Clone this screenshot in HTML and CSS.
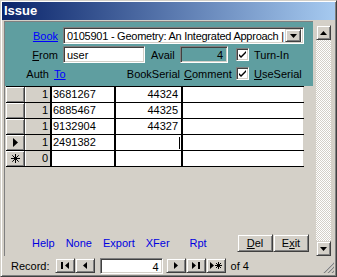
FILE: index.html
```html
<!DOCTYPE html>
<html lang="en">
<head>
  <meta charset="UTF-8">
  <title>Issue</title>
  <link rel="stylesheet" href="styles.css">
</head>
<body>

<div class="window">
  <div class="titlebar">Issue</div>

  <div class="client">
    <div class="form">

      <div class="header">
        <div class="hrow">
          <span class="lbl"><a class="link">Book</a></span>
          <div class="field combo">
            <span class="combo-text">0105901 - Geometry: An Integrated Approach |</span>
            <span class="btn combo-btn"><svg width="7" height="4"><path d="M0 0h7l-3.5 4z"/></svg></span>
          </div>
        </div>

        <div class="hrow">
          <span class="lbl"><u>F</u>rom</span>
          <div class="field from">user</div>
          <span class="avail-lbl">Avail</span>
          <div class="field avail">4</div>
          <span class="check"><svg width="7" height="7"><path d="M0 3l2 2 5-5v2l-5 5-2-2z"/></svg></span>
          <span class="check-lbl">Turn-In</span>
        </div>

        <div class="hrow cols">
          <span class="c-auth">Auth</span>
          <span class="c-to"><a class="link">To</a></span>
          <span class="c-serial">BookSerial</span>
          <span class="c-comment"><u>C</u>omment</span>
          <span class="check"><svg width="7" height="7"><path d="M0 3l2 2 5-5v2l-5 5-2-2z"/></svg></span>
          <span class="check-lbl"><u>U</u>seSerial</span>
        </div>
      </div>

      <div class="grid">
        <div class="row">
          <span class="sel"></span><span class="auth">1</span><span class="cell">3681267</span><span class="cell num">44324</span><span class="cell comment"></span>
        </div>
        <div class="row">
          <span class="sel"></span><span class="auth">1</span><span class="cell">6885467</span><span class="cell num">44325</span><span class="cell comment"></span>
        </div>
        <div class="row">
          <span class="sel"></span><span class="auth">1</span><span class="cell">9132904</span><span class="cell num">44327</span><span class="cell comment"></span>
        </div>
        <div class="row">
          <span class="sel"><svg width="5" height="9"><path d="M0 0l5 4.5-5 4.5z"/></svg></span><span class="auth">1</span><span class="cell">2491382</span><span class="cell num"><i class="caret"></i></span><span class="cell comment"></span>
        </div>
        <div class="row">
          <span class="sel"><svg width="9" height="9" stroke="#000" stroke-width="1"><path d="M4.5 0v9M0 4.5h9M1.3 1.3l6.4 6.4M7.7 1.3l-6.4 6.4"/></svg></span><span class="auth">0</span><span class="cell"></span><span class="cell num"></span><span class="cell comment"></span>
        </div>
      </div>

      <div class="footer">
        <a class="flink">Help</a>
        <a class="flink">None</a>
        <a class="flink">Export</a>
        <a class="flink">XFer</a>
        <a class="flink rpt">Rpt</a>
        <span class="buttons">
          <span class="btn push"><u>D</u>el</span>
          <span class="btn push">E<u>x</u>it</span>
        </span>
      </div>

    </div>

    <div class="vscroll">
      <span class="btn sbtn"><svg width="7" height="4"><path d="M3.5 0l3.5 4h-7z"/></svg></span>
      <span class="track"></span>
      <span class="btn sbtn"><svg width="7" height="4"><path d="M0 0h7l-3.5 4z"/></svg></span>
    </div>
  </div>

  <div class="navbar">
    <span class="rec">Record:</span>
    <span class="btn nbtn"><svg width="8" height="7"><path d="M0 0h2v7h-2zM8 0v7l-4-3.5z"/></svg></span>
    <span class="btn nbtn"><svg width="4" height="7"><path d="M4 0v7l-4-3.5z"/></svg></span>
    <span class="field recno">4</span>
    <span class="btn nbtn"><svg width="4" height="7"><path d="M0 0v7l4-3.5z"/></svg></span>
    <span class="btn nbtn"><svg width="8" height="7"><path d="M0 0v7l4-3.5zM6 0h2v7h-2z"/></svg></span>
    <span class="btn nbtn"><svg width="12" height="7"><path d="M0 0v7l4-3.5z"/><path d="M8.5 0v7M5 3.5h7M6 1l5 5M11 1l-5 5" stroke="#000" stroke-width="1"/></svg></span>
    <span class="of">of 4</span>
    <span class="grip"><svg width="11" height="11"><path d="M10 1L1 10M10 5L5 10M10 9L9 10" stroke="#fff" stroke-width="1"/><path d="M11 1L1 11M11 5L5 11M11 9L9 11" stroke="#808080" stroke-width="1.2"/></svg></span>
  </div>
</div>

</body>
</html>
```

FILE: styles.css
```css
* {
  box-sizing: border-box;
}
body {
  margin: 0;
  background: #d4d0c8;
  font-family: "Liberation Sans", Arial, sans-serif;
  font-size: 11px;
  color: #000;
}
.window {
  width: 337px;
  height: 277px;
  display: flex;
  flex-direction: column;
  background: #d4d0c8;
  border: 1px solid;
  border-color: #d4d0c8 #404040 #404040 #d4d0c8;
  box-shadow: inset 1px 1px #fff, inset -1px -1px #808080;
  padding: 1px;
}
.titlebar {
  height: 18px;
  line-height: 18px;
  padding-left: 2px;
  color: #fff;
  font-weight: bold;
  font-size: 13px;
  background: linear-gradient(to right, #0a246a, #a6caf0);
}
.client {
  display: flex;
  height: 235px;
  margin-top: 1px;
}
.form {
  width: 309px;
  margin-left: 2px;
  border-left: 1px solid #808080;
  border-top: 1px solid #808080;
  display: flex;
  flex-direction: column;
}

/* header */
.header {
  background: #5f9ea0;
  height: 64px;
  padding-top: 5px;
}
.hrow {
  display: flex;
  align-items: center;
  height: 17px;
  margin-bottom: 2px;
}
.hrow.cols {
  margin-top: 3px;
  height: 15px;
}
.lbl {
  width: 53px;
  text-align: right;
  margin-right: 5px;
}
.link {
  color: #0000ff;
  text-decoration: underline;
}
.field {
  height: 17px;
  background: #fff;
  border: 1px solid;
  border-color: #808080 #fff #fff #808080;
  box-shadow: inset 1px 1px #404040, inset -1px -1px #d4d0c8;
  padding: 2px 3px 0;
  line-height: 13px;
}
.combo {
  width: 241px;
  display: flex;
  padding-right: 2px;
}
.combo-text {
  flex: 1;
  white-space: nowrap;
  overflow: hidden;
  letter-spacing: -0.25px;
}
.btn {
  display: flex;
  align-items: center;
  justify-content: center;
  background: #d4d0c8;
  border: 1px solid;
  border-color: #d4d0c8 #404040 #404040 #d4d0c8;
  box-shadow: inset 1px 1px #fff, inset -1px -1px #808080;
}
.combo-btn {
  width: 16px;
  height: 13px;
  margin-top: -1px;
}
.from {
  width: 82px;
}
.avail-lbl {
  margin-left: 6px;
  width: 29px;
}
.avail {
  width: 48px;
  background: #5f9ea0;
  text-align: right;
  padding-right: 4px;
}
.check {
  width: 13px;
  height: 13px;
  margin-left: 8px;
  background: #fff;
  border: 1px solid;
  border-color: #808080 #fff #fff #808080;
  box-shadow: inset 1px 1px #404040, inset -1px -1px #d4d0c8;
  display: flex;
  align-items: center;
  justify-content: center;
}
.check-lbl {
  margin-left: 5px;
}
.c-auth {
  width: 44px;
  text-align: right;
}
.c-to {
  width: 58px;
  margin-left: 5px;
}
.c-serial {
  width: 68px;
  text-align: right;
}
.c-comment {
  width: 44px;
  margin-left: 4px;
}
.cols .check {
  margin-left: 8px;
}

/* datasheet */
.grid {
  margin-left: 1px;
  border-top: 1px solid #000;
  width: 298px;
}
.row {
  display: flex;
  height: 16px;
  border-bottom: 1px solid #000;
  line-height: 15px;
}
.sel {
  width: 19px;
  background: #d4d0c8;
  border-right: 1px solid #404040;
  box-shadow: inset 1px 1px #fff, inset -1px -1px #808080;
  display: flex;
  align-items: center;
  justify-content: center;
}
.auth {
  width: 27px;
  background: #d4d0c8;
  border-right: 2px solid #000;
  box-shadow: inset 1px 0 #fff;
  text-align: right;
  padding-right: 2px;
}
.cell {
  background: #fff;
  width: 64px;
  border-right: 2px solid #000;
  padding-left: 1px;
}
.cell.num {
  width: 67px;
  text-align: right;
  padding-right: 3px;
  position: relative;
}
.cell.comment {
  width: 121px;
  border-right: 1px solid #d4d0c8;
}
.caret {
  position: absolute;
  right: 1px;
  top: 2px;
  width: 1px;
  height: 12px;
  background: #000;
}

/* footer */
.footer {
  margin-top: auto;
  margin-bottom: 4px;
  display: flex;
  align-items: center;
  padding-left: 27px;
  padding-right: 4px;
}
.flink {
  color: #0000e0;
  margin-right: 11px;
}
.rpt {
  margin-left: 9px;
}
.buttons {
  margin-left: auto;
  display: flex;
}
.push {
  width: 36px;
  height: 18px;
}

/* scrollbar */
.vscroll {
  width: 15px;
  margin-left: 3px;
  margin-top: 4px;
  display: flex;
  flex-direction: column;
}
.sbtn {
  height: 15px;
}
.track {
  flex: 1;
  background: repeating-conic-gradient(#fff 0 25%, #d4d0c8 0 50%) 0 0 / 2px 2px;
}

/* record navigation */
.navbar {
  flex: 1;
  display: flex;
  align-items: center;
  padding-left: 9px;
}
.rec {
  margin-right: 5px;
}
.nbtn {
  width: 20px;
  height: 15px;
}
.recno {
  width: 63px;
  height: 16px;
  margin: 0 3px 0 5px;
  text-align: right;
  padding-right: 3px;
}
.of {
  margin-left: 5px;
}
.grip {
  margin-left: auto;
  margin-right: 1px;
  margin-top: 4px;
  display: flex;
}
```
